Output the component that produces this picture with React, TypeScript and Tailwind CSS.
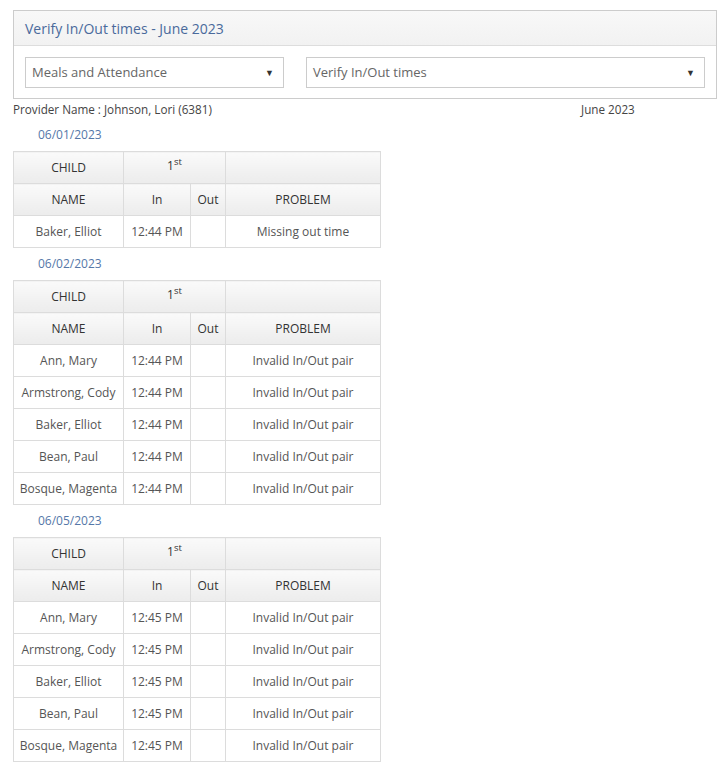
import React from 'react'

type Row = { name: string; inTime: string; problem: string }

const DAYS: { date: string; rows: Row[] }[] = [
  { date: '06/01/2023', rows: [{ name: 'Baker, Elliot', inTime: '12:44 PM', problem: 'Missing out time' }] },
  {
    date: '06/02/2023',
    rows: [
      { name: 'Ann, Mary', inTime: '12:44 PM', problem: 'Invalid In/Out pair' },
      { name: 'Armstrong, Cody', inTime: '12:44 PM', problem: 'Invalid In/Out pair' },
      { name: 'Baker, Elliot', inTime: '12:44 PM', problem: 'Invalid In/Out pair' },
      { name: 'Bean, Paul', inTime: '12:44 PM', problem: 'Invalid In/Out pair' },
      { name: 'Bosque, Magenta', inTime: '12:44 PM', problem: 'Invalid In/Out pair' },
    ],
  },
  {
    date: '06/05/2023',
    rows: [
      { name: 'Ann, Mary', inTime: '12:45 PM', problem: 'Invalid In/Out pair' },
      { name: 'Armstrong, Cody', inTime: '12:45 PM', problem: 'Invalid In/Out pair' },
      { name: 'Baker, Elliot', inTime: '12:45 PM', problem: 'Invalid In/Out pair' },
      { name: 'Bean, Paul', inTime: '12:45 PM', problem: 'Invalid In/Out pair' },
      { name: 'Bosque, Magenta', inTime: '12:45 PM', problem: 'Invalid In/Out pair' },
    ],
  },
]

function Select({ label, width }: { label: string; width: string }) {
  return (
    <div className={`${width} h-[31px] border border-[#ccc] bg-white flex items-center justify-between pl-[6px] pr-[9px] text-[13px] text-[#666]`}>
      <span>{label}</span>
      <span className="text-[9px] text-[#333]">▼</span>
    </div>
  )
}

const TH = 'border border-[#dcdcdc] h-[32px] p-0 text-center text-[#333] bg-gradient-to-b from-[#fafafa] to-[#ececec]'
const TD = 'border border-[#dcdcdc] h-[32px] p-0 text-center text-[#555]'

function DayTable({ rows }: { rows: Row[] }) {
  return (
    <table className="border-collapse text-[12px] table-fixed w-[367px]">
      <colgroup>
        <col className="w-[110px]" />
        <col className="w-[67px]" />
        <col className="w-[35px]" />
        <col className="w-[155px]" />
      </colgroup>
      <thead>
        <tr>
          <th className={`${TH} font-medium`}>CHILD</th>
          <th className={`${TH} font-normal`} colSpan={2}>
            <span className="relative -top-[2px]">
              1<span className="relative -top-[5px] text-[9.5px]">st</span>
            </span>
          </th>
          <th className={`${TH} font-normal`}></th>
        </tr>
        <tr>
          <th className={`${TH} font-medium`}>NAME</th>
          <th className={`${TH} font-normal`}>In</th>
          <th className={`${TH} font-normal`}>Out</th>
          <th className={`${TH} font-medium`}>PROBLEM</th>
        </tr>
      </thead>
      <tbody>
        {rows.map(r => (
          <tr key={r.name}>
            <td className={TD}>{r.name}</td>
            <td className={TD}>{r.inTime}</td>
            <td className={TD}></td>
            <td className={TD}>{r.problem}</td>
          </tr>
        ))}
      </tbody>
    </table>
  )
}

export default function App() {
  return (
    <div className="bg-white min-h-screen pt-[10px] pl-[13px] font-['Open_Sans',sans-serif] text-[#444]">
      {/* Panel */}
      <div className="w-[704px] border border-[#ccc]">
        <div className="h-[35px] flex items-center pl-[11px] border-b border-[#ddd] bg-gradient-to-b from-[#f8f8f8] to-[#f2f2f2] text-[14px] text-[#4a6a9c]">
          Verify In/Out times - June 2023
        </div>
        <div className="flex gap-[22px] pl-[11px] pt-[11px] pb-[10px]">
          <Select label="Meals and Attendance" width="w-[259px]" />
          <Select label="Verify In/Out times" width="w-[399px]" />
        </div>
      </div>

      {/* Provider line */}
      <div className="flex h-[20px] items-end text-[11.7px] text-[#444]">
        <span className="w-[568px]">Provider Name : Johnson, Lori (6381)</span>
        <span>June 2023</span>
      </div>

      {DAYS.map(day => (
        <div key={day.date}>
          <div className="h-[32px] flex items-center pl-[25px] text-[12px] text-[#5577a8]">{day.date}</div>
          <DayTable rows={day.rows} />
        </div>
      ))}
    </div>
  )
}
